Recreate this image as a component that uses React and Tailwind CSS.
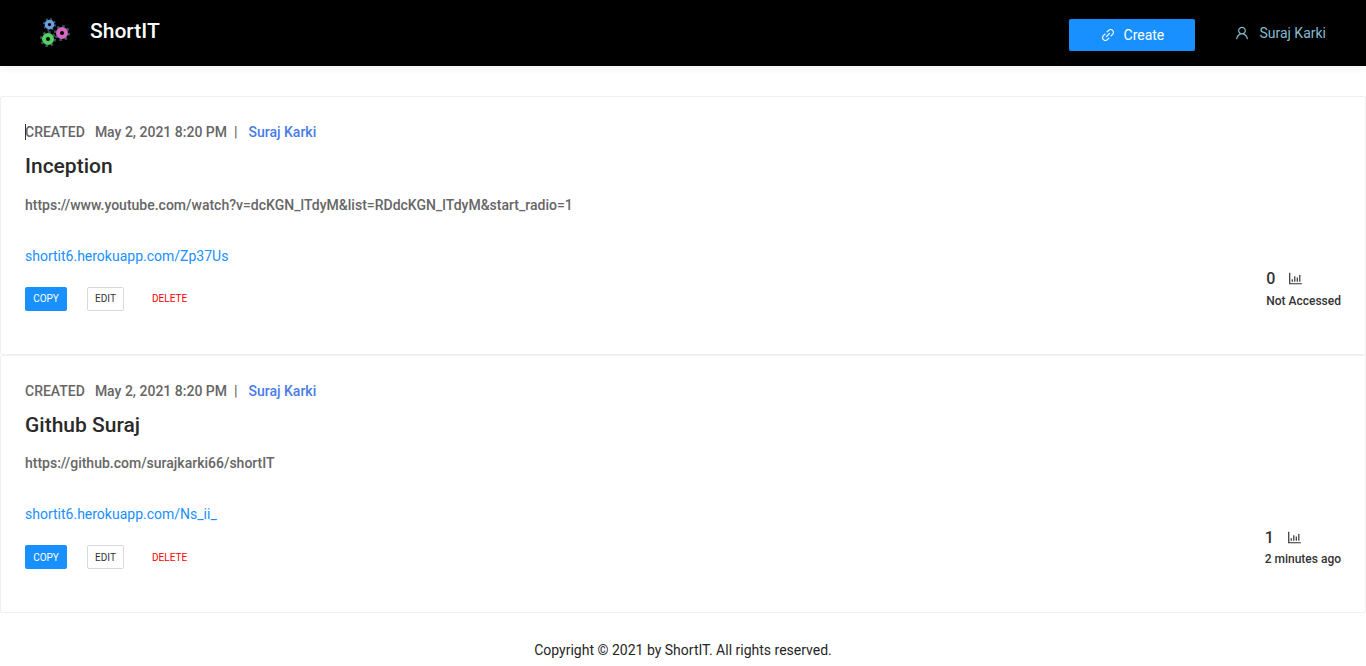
import React from "react";
import { AiOutlineLink, AiOutlineUser, AiOutlineBarChart } from "react-icons/ai";

const links = [
  {
    title: "Inception",
    url: "https://www.youtube.com/watch?v=dcKGN_lTdyM&list=RDdcKGN_lTdyM&start_radio=1",
    short: "shortit6.herokuapp.com/Zp37Us",
    count: 0,
    accessed: "Not Accessed",
    caret: true,
  },
  {
    title: "Github Suraj",
    url: "https://github.com/surajkarki66/shortIT",
    short: "shortit6.herokuapp.com/Ns_ii_",
    count: 1,
    accessed: "2 minutes ago",
  },
];

// small cog: dashed outer ring gives the teeth
const Gear = ({ color, size }) => (
  <svg width={size} height={size} viewBox="0 0 24 24" fill="none">
    <circle cx="12" cy="12" r="10" stroke="#35565c" strokeWidth="4" strokeDasharray="3.6 4.25" />
    <circle cx="12" cy="12" r="6" stroke={color} strokeWidth="6" />
  </svg>
);

const Logo = () => (
  <div className="grid w-[32px] h-[30px] grid-cols-[auto_auto] ml-[40px]">
    <div className="col-start-1 row-start-1 ml-[3px] mt-0">
      <Gear color="#6d9be0" size={13} />
    </div>
    <div className="col-start-2 row-start-1 row-span-2 -ml-[4px] mt-[7px]">
      <Gear color="#d667c0" size={16} />
    </div>
    <div className="col-start-1 row-start-2 -mt-[2px]">
      <Gear color="#55d060" size={16} />
    </div>
  </div>
);

const LinkCard = ({ link }) => (
  <div className="relative flex justify-between border border-[#f0f0f0] h-[258.6px] rounded-[2px] pt-6 pb-[43px] px-6 bg-white">
    <div className="flex flex-col items-start">
      <div className="relative flex items-center h-[22px] text-sm font-medium text-[#666]">
        {link.caret && <span className="absolute left-0 top-[3px] w-px h-4 bg-[#333]" />}
        <span>CREATED</span>
        <span className="ml-[10px]">May 2, 2021 8:20 PM</span>
        <span className="ml-[7px]">|</span>
        <span className="ml-[11px] text-[#4a7bea]">Suraj Karki</span>
      </div>
      <h2 className="mt-[9.4px] text-[21px] leading-7 font-medium text-[#2a2a2a]">{link.title}</h2>
      <p className="mt-[13.2px] text-sm leading-[22px] font-medium text-[#666]">{link.url}</p>
      <a className="mt-[29px] text-sm leading-[22px] text-[#1890ff]">{link.short}</a>
      <div className="mt-5 flex items-center">
        <button className="h-6 w-[42px] rounded-[2px] bg-[#1890ff] text-[10px] text-white">COPY</button>
        <button className="ml-5 h-6 w-[37px] rounded-[2px] border border-[#d9d9d9] bg-white text-[10px] text-[#333]">EDIT</button>
        <button className="ml-7 text-[10px] text-[#ff0000]">DELETE</button>
      </div>
    </div>
    <div className="flex flex-col justify-end">
      <div>
        <div className="flex items-center h-[22px] mb-[0.6px]">
          <span className="text-base font-medium text-[#333] w-[22px]">{link.count}</span>
          <AiOutlineBarChart className="text-[17px] text-[#333] -mt-[1px] -ml-[1px]" />
        </div>
        <div className="text-xs leading-[20px] font-medium text-[#333]">{link.accessed}</div>
      </div>
    </div>
  </div>
);

export default function App() {
  return (
    <div className="min-h-[666px] bg-white font-['Roboto',sans-serif]">
      <header className="relative flex items-center justify-between h-[66px] bg-black shadow-[0_2px_8px_#f0f0f0]">
        <div className="flex items-center">
          <Logo />
          <span className="ml-[18px] -mt-[2px] text-[21px] font-medium text-white">ShortIT</span>
        </div>
        <div className="flex items-center pr-10">
          <button className="flex items-center justify-center mt-1 w-[126px] h-8 rounded-[2px] bg-[#1890ff] text-sm text-white">
            <AiOutlineLink className="text-[16px] mr-[8px] -ml-[1px]" />
            Create
          </button>
          <div className="ml-10 flex items-center text-sm text-[#85bbd0]">
            <AiOutlineUser className="text-[16px] mr-[9px] -ml-[1px]" />
            Suraj Karki
          </div>
        </div>
      </header>
      <main className="pt-[30px]">
        {links.map((link) => (
          <LinkCard key={link.title} link={link} />
        ))}
      </main>
      <footer className="pt-[26px] text-center text-sm leading-[22px] text-[#262626]">
        Copyright © 2021 by ShortIT. All rights reserved.
      </footer>
    </div>
  );
}
